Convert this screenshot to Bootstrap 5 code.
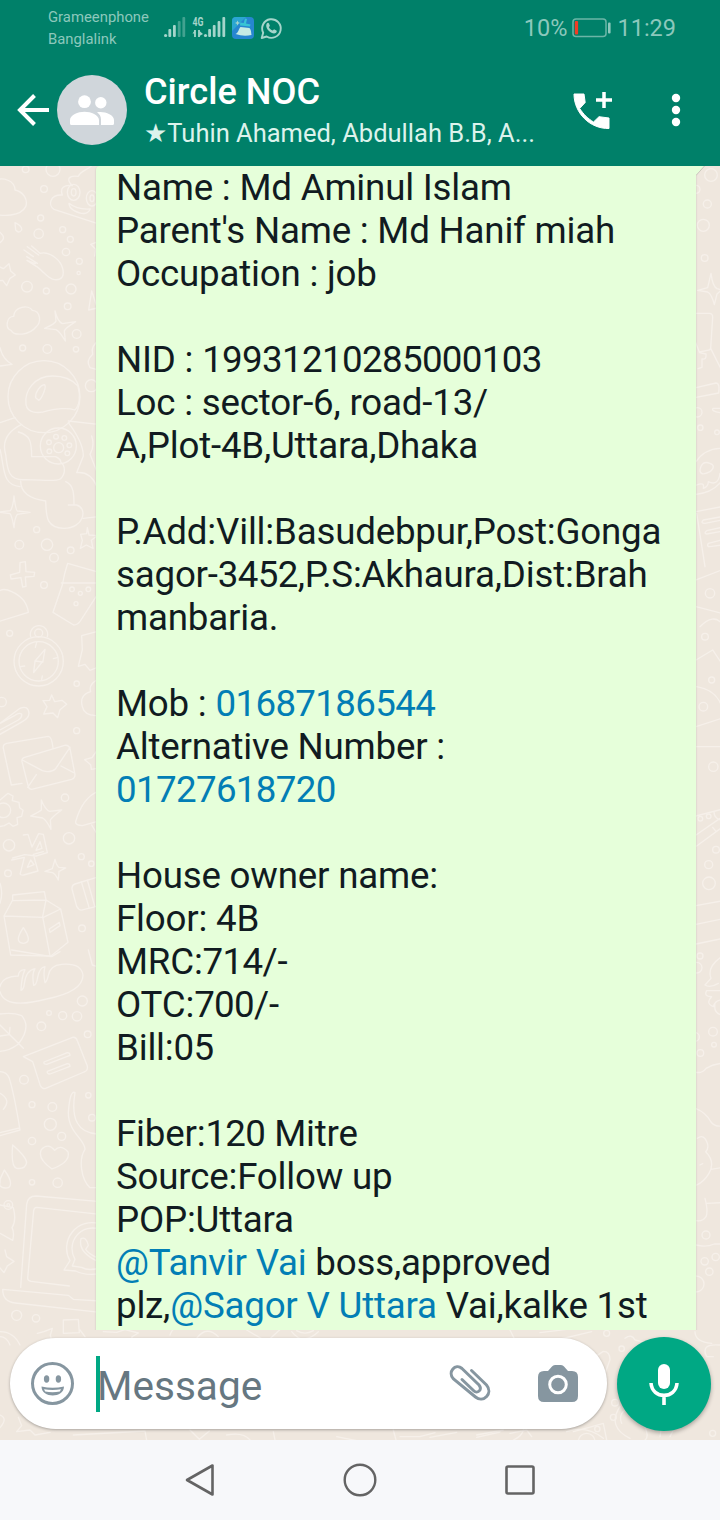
<!DOCTYPE html>
<html lang="en">
<head>
<meta charset="utf-8">
<meta name="viewport" content="width=device-width, initial-scale=1">
<title>Circle NOC</title>
<link href="https://cdn.jsdelivr.net/npm/bootstrap@5.3.0/dist/css/bootstrap.min.css" rel="stylesheet">
<style>
body{font-family:Roboto,"Liberation Sans",sans-serif;width:720px;height:1520px;overflow:hidden;background:#efe7de}
svg{display:block;flex:none}
.statusbar{height:55px;background:#008069;color:#8cc8bc;padding:0 44px 0 48px}
.carriers{font-size:14.85px;line-height:22px;width:116px;padding-top:1px}
.clock{font-size:23.5px;line-height:28px}
.clock svg{margin:0 6px 0 5px}
.appbar{height:111px;background:#008069;color:#fff;padding:0 0 2px 17px}
.avatar{width:70px;height:70px;background:#d0d6db;margin-left:8px}
.chat-head{width:428px;margin-left:17px}
.chat-title{font-size:36.2px;line-height:40px;font-weight:500;margin-bottom:6px}
.chat-sub{font-size:25.5px;line-height:30px;color:#dcf3ec}
.star{font-family:"DejaVu Sans",sans-serif;font-size:26px;line-height:20px}
.more{margin-left:59px}
.chat{height:1274px}
.wallpaper{top:0;left:0;z-index:0}
.thread{height:1164px;padding-left:96px;z-index:1;overflow:hidden}
.bubble{width:600px;height:1170px;background:#e6ffda;padding-left:20px;font-size:36.7px;line-height:43px;letter-spacing:-.2px;color:#111b21;box-shadow:0 1px 2px rgba(0,0,0,.2);border-top-left-radius:4px}
.bubble div{height:43px;white-space:nowrap}
.bubble a{color:#027eb5;text-decoration:none}
.bubble .num{letter-spacing:-.64px}
.tail{top:0;left:696px}
.composer{height:110px;padding:7px 9px 0 10px;z-index:2}
.field{width:597px;height:91px;margin-top:1px;border-radius:46px;background:#fff;box-shadow:0 1px 3px rgba(0,0,0,.3);padding-left:20px}
.caret{width:4px;height:56px;background:#00a884;margin-left:21px}
.hint{font-size:40.6px;line-height:48px;color:#667781;margin-left:-3px;padding-top:4px;width:351px}
.camera{margin-left:46px}
.mic{width:94px;height:94px;background:#00a884;box-shadow:0 2px 4px rgba(0,0,0,.3)}
.sysnav{height:80px;background:#f7f8fa;gap:124px}
</style>
</head>
<body class="d-flex flex-column">
<header>
  <div class="statusbar d-flex align-items-center">
    <div class="carriers"><div>Grameenphone</div><div>Banglalink</div></div>
    <svg width="120" height="28" viewBox="0 0 120 28" fill="#a5d5cb">
      <g><circle cx="1.6" cy="21.5" r="1.6"/><rect x="4.4" y="15" width="2.8" height="8" rx="1"/><rect x="9" y="11" width="2.8" height="12" rx="1"/><g opacity=".4"><rect x="13.8" y="7" width="2.8" height="16" rx="1"/><rect x="18.4" y="3" width="2.8" height="20" rx="1"/></g></g>
      <text x="28.5" y="12" font-size="12" font-weight="700" textLength="11" lengthAdjust="spacingAndGlyphs">4G</text>
      <path d="M31 16v7M35 16v7" stroke="#a5d5cb" stroke-width="1.8"/><path d="M28.5 19.5L31 16v3.5zM35.5 17l3.5 3-3.5 2z"/>
      <circle cx="41.5" cy="21.5" r="1.6"/><rect x="44.2" y="15" width="2.8" height="8" rx="1"/><rect x="48.8" y="11" width="2.8" height="12" rx="1"/><rect x="53.6" y="7" width="2.8" height="16" rx="1"/><rect x="58.4" y="3" width="2.8" height="20" rx="1"/>
      <rect x="68" y="3" width="22" height="22" rx="4" fill="#2786d0"/><path d="M68 17V7a4 4 0 0 1 4-4h10z" fill="#2ba6d2"/>
      <path d="M71.5 20c3-1 3-5 5-7l9 1c2 2 1.5 5 2 7q-8 2-16-1z" fill="#c5ebe4"/><path d="M76 11.500l10 1 .5-2-4.500-1 1-4.500-2-.5-1.300 4.500-3.500-.5z" fill="#38c4d4"/><path d="M73.500 6.500l.8 1.700 1.700.8-1.700.8-.8 1.700-.8-1.700-1.700-.8 1.700-.8z" fill="#a5d5cb"/>
      <path d="M97.700 24l1.500-5.200A9.300 9.300 0 1 1 102.700 22.500z" fill="none" stroke="#a5d5cb" stroke-width="1.900" stroke-linejoin="round"/><path d="M102.800 9.500c.8-1 1.800-.8 2.200 0l.8 2c.2.700-.7 1.200-.9 1.700 1 1.800 2 2.600 3.800 3.400.7-.4 1-1.400 1.700-1.200l2 1c.8.500.2 2-.7 2.600-2 1.200-4.700-.2-6.700-2s-3.700-5-2.200-7.500z"/>
    </svg>
    <div class="clock ms-auto d-flex align-items-center">
      <span>10%</span>
      <svg width="39" height="20" viewBox="0 0 39 20"><rect x="1" y="1" width="33" height="17.500" rx="3" fill="none" stroke="#6bb5a7" stroke-width="1.500"/><rect x="2.800" y="3" width="3.300" height="13.500" rx="1" fill="#f03d25"/><rect x="36" y="4.500" width="2.600" height="11" rx="1" fill="#8cc8bc"/></svg>
      <span>11:29</span>
    </div>
  </div>
  <div class="appbar d-flex align-items-center">
    <svg width="32" height="32" viewBox="0 0 32 32" fill="none" stroke="#fff" stroke-width="4"><path d="M32 16H3M17.500 1.500L3 16l14.500 14.500"/></svg>
    <div class="avatar rounded-circle d-flex align-items-center justify-content-center">
      <svg width="44" height="30" viewBox="0 0 44 30" fill="#fff"><circle cx="14.500" cy="6.700" r="6.400"/><circle cx="30.800" cy="7.800" r="5.700"/><path d="M0 28.500V25c0-5 8-8.300 14.500-8.300S29 20 29 25v5H1.500Q0 30 0 28.500zM31 30v-5.500c0-3-1.500-5.500-4-7.200C33 15.700 44 19 44 25v3.500q0 1.500-1.500 1.500z"/></svg>
    </div>
    <div class="chat-head">
      <div class="chat-title">Circle NOC</div>
      <div class="chat-sub text-nowrap"><span class="star">★</span>Tuhin Ahamed, Abdullah B.B, A...</div>
    </div>
    <svg width="40" height="40" viewBox="0 0 40 40" fill="#fff"><path d="M2 4h10l1.200 8.500-5.500 6C12 25 16 28.500 21.500 32l5.500-5.300 10 1.300v10.500C18 39 2 23 2 4z" stroke="#fff" stroke-width="1" stroke-linejoin="round"/><path d="M32 2v16M24 10h16" stroke="#fff" stroke-width="3.500"/></svg>
    <svg class="more" width="10" height="34" viewBox="0 0 10 34" fill="#fff"><circle cx="5" cy="5" r="4.200"/><circle cx="5" cy="17" r="4.200"/><circle cx="5" cy="29" r="4.200"/></svg>
  </div>
</header>

<main class="chat position-relative">
  <svg class="wallpaper position-absolute" width="720" height="1274" viewBox="0 0 720 1274" fill="none" stroke="#f6f0ea" stroke-width="4" stroke-linejoin="round" stroke-linecap="round">
    <!-- left strip: clouds, glove, astronaut -->
    <g transform="scale(.33333)">
      <circle cx="77" cy="10" r="10"/><circle cx="159" cy="10" r="21"/><circle cx="132" cy="69" r="10"/><circle cx="122" cy="156" r="9"/><circle cx="116" cy="203" r="14"/><circle cx="188" cy="191" r="9"/><circle cx="211" cy="220" r="9"/><circle cx="198" cy="258" r="11"/><circle cx="238" cy="286" r="9"/><circle cx="236" cy="321" r="5"/><circle cx="81" cy="362" r="16"/><circle cx="139" cy="375" r="9"/><circle cx="213" cy="369" r="15"/><circle cx="203" cy="421" r="10"/><circle cx="230" cy="504" r="13"/><circle cx="228" cy="550" r="8"/><circle cx="142" cy="549" r="13"/><circle cx="68" cy="546" r="9"/><circle cx="274" cy="659" r="18"/>
      <path d="M-20 45C10 30 45 45 45 72c25 5 40 30 32 50-15 30-70 30-100 20"/>
      <path d="M300 175L162 130c-18-12-14-45 25-43-8-20 5-32 30-28-20-20-10-32 18-28 10-22 40-20 50-45"/><ellipse cx="221" cy="79" rx="19" ry="24"/><ellipse cx="221" cy="79" rx="7" ry="11"/><ellipse cx="276" cy="97" rx="17" ry="23"/><ellipse cx="276" cy="97" rx="6" ry="10"/><path d="M207 112q25 20 64 17-12 25-50 4-14-8-14-21z"/>
      <path d="M45 170q22 10 20 22-8 12-18 0zM-5 195q20 15 14 25t-14 12M-5 300l15 8 17-15 5 22 14 12-16 10-10 22-12-16-15 2"/>
      <path d="M72 252l28 20M82 242l34 25M95 240l25 22c28-8 62 20 68 45 6 25-4 36-24 34-20-2-38-30-55-40l-28-18 25 10M80 272l32 20"/>
      <path d="M33 493c-20-8-12-42 8-42 2-30 45-36 56-18 25 2 28 35 11 50-20 25-65 28-75 10z"/>
      <path d="M165 435q8 32 22 38l40-6q-32 20-34 28l3 30q-18-30-28-34l-34-4q32-14 34-22zM275 375l-9 57 26-6zM300 225l-28 10 15 15-3 20M0 545q8 35 36 50L0 600"/>
      <circle cx="132" cy="692" r="108"/><path d="M78 715c-5-40 25-85 80-85 35 0 60 12 76 30 8 30 5 60-10 72-20-8-60-3-80 2-30 10-62 8-66-19zM107 695c-2-18 15-38 26-39 8 5-6 40-17 47z"/>
      <path d="M65 775c-40 20-60 50-48 90 5 50 10 80 60 76 50 0 90 8 105-3 15-15 15-38 0-50 0 0 2-8-15-16h-72c0-45-5-65-40-74"/><path d="M45 755L0 770M0 850c15 60 5 105 60 112M62 945q0 50 75 60c2 45 0 80 55 82 60 0 72-60 38-70h-25M222 1017c0-30 0-60-25-70M250 1057l45-5M205 765l90 10M205 770q45 60 45 100l-20 50q40-5 60 40M275 810q10 30-5 55l20 50"/>
      <circle cx="175" cy="840" r="54"/><circle cx="176" cy="845" r="15"/><circle cx="147" cy="829" r="7"/><circle cx="168" cy="812" r="7"/><circle cx="193" cy="816" r="7"/><circle cx="208" cy="838" r="7"/><circle cx="202" cy="862" r="7"/><circle cx="148" cy="856" r="7"/>
      <path d="M300 520q-30 20-22 45-22 20-8 40l30 8"/>
      <path d="M42 990q5 42 10 45l38 4-38 6q-8 10-10 40-6-35-12-42l-35-5 36-4q8-10 11-44zM262 1085l5 22 25 2-18 14 5 24-20-10-18 10 6-24-5-18 18-2z"/>
      <circle cx="110" cy="1091" r="9"/><circle cx="141" cy="1136" r="17"/><circle cx="58" cy="1136" r="13"/><circle cx="162" cy="1175" r="13"/><circle cx="212" cy="1153" r="10"/>
    </g>
    <!-- left strip: compass, envelopes, carton -->
    <g transform="translate(0 394) scale(.33333)">
      <path d="M60 8l16-3 2 30 26 2-2 12-26 2 2 28-10 2-5-28-30 4-2-12 28-8zM203 10l97 28M184 69h110M203 10q-10 30-16 65l-28 82 62 38q12 0 20-12l55-85"/><path d="M-10 100q15-20 45-5 45 20 50 62L-5 185"/>
      <circle cx="132" cy="75" r="10"/><circle cx="216" cy="88" r="7"/><circle cx="241" cy="100" r="6"/><circle cx="265" cy="88" r="7"/><circle cx="228" cy="131" r="6"/><circle cx="29" cy="220" r="9"/><circle cx="230" cy="371" r="8"/><circle cx="230" cy="512" r="9"/><circle cx="5" cy="426" r="14"/><circle cx="195" cy="713" r="11"/><circle cx="207" cy="835" r="17"/><circle cx="27" cy="856" r="17"/><circle cx="244" cy="890" r="9"/><circle cx="274" cy="911" r="8"/><circle cx="24" cy="940" r="10"/><circle cx="246" cy="1105" r="10"/>
      <circle cx="116" cy="304" r="74"/><circle cx="116" cy="304" r="59"/><path d="M92 230a26 26 0 1 1 50 0M106 262l4-15M125 358l2-10M62 320l12-2M160 296l12-3M135 268l-30 35-4 35 28-35zM105 303l24 3"/><circle cx="116" cy="219" r="12"/>
      <path d="M290 215l-45 12 2 42-12 50 20-6 15 18 25-10M290 360q-25 15-18 35-35 10-25 45 5 25 40 27M0 490l60-45q25-10 27 15 0 15-20 25L0 523M0 510l55-30q12-8 10-18-8-5-20 4L0 490"/>
      <path d="M155 405l9 20 22-4 14 12-20 16-7 24-14-14-28 3 10-22-12-18 20-1zM66 670l-32 5L10 565q-2-12 10-15l125-21q10 0 14 34M66 605q-2-10 8-13l120-36q12-2 16 10l15 78q0 10-10 14L95 688q-8 0-10-8zM67 600l60 32q25 8 40-6l43-64M83 682l26-38M183 618l38 20"/>
      <path d="M0 720l10-8 14-12 15 8-2 14 20 5 2 16 10 8-4 18-14 4 2 20-14 6-12-10-14 8-20 4"/><circle cx="10" cy="751" r="22"/>
      <path d="M124 720q12 30 25 34l36-4q-28 20-34 30l2 28q-14-28-25-34l-36-6q25-12 32-18zM70 825l14-2 12 38 20-40 14 2 12 55-34 10-34-4-36 10M35 900l38-8-12 48q-2 6 10 5l43-12-14-50 30-8M92 900l10 14-20 8zM120 845l6 20-18 6zM165 898q5 20 12 24l20 2-20 10-2 26q-10-20-18-22l-22-4 22-8zM292 695q-45 20-65 90-2 10 20 12l43-12M275 795l15 25M290 573l-14 20-22 6 18 15 2 14 14-2"/>
      <path d="M38 1005l95-10 5 25-100 2zM38 1020l-26 48 118 4 52-25-44-27-10 50 22 118L32 1185l-20-117M182 1047l22 100-54 43M70 1103q-30 45 0 47 30-2 0-47zM148 1107l30-20 2 10-30 20z"/>
      <path d="M290 952l-65 20q-10 3-9 15l14 52q8 15 20 10l40-10M244 965l24 80M262 960l22 78M0 970q10 30 0 60"/>
    </g>
    <!-- left strip: bread, speech note, laptop -->
    <g transform="translate(0 784) scale(.33333)">
      <path d="M0 110q5-30 55-32 0-18 20-19-10 20-12 62 8-2 10-20 5-40 32-45-10 15-4 50 8 0 12-24 6-30 22-32-6 20 0 48 6-4 10-22 5-30 40-33 58-5 64 32 0 50-109 72Q15 180 0 125M35 0l120 20 25-15M0 192q40-5 65 5 30 35-10 85-25 20-55 22M0 225l70 70M30 232l-2 22-28 4M265 0l12 45 15 5"/>
      <path d="M70 320l148-58q10-2 14 10l30 76q3 14-10 18L135 416q-10 0-15-12L98 335zM132 336l70-28q8 0 8 8l-70 27q-10 0-8-7zM142 364l60-23q8 0 8 8l-60 23q-10 0-8-8z"/>
      <circle cx="247" cy="153" r="15"/><circle cx="147" cy="189" r="7"/><circle cx="188" cy="197" r="12"/><circle cx="231" cy="199" r="14"/><circle cx="124" cy="229" r="13"/><circle cx="263" cy="253" r="10"/><circle cx="72" cy="389" r="13"/><circle cx="96" cy="464" r="9"/><circle cx="157" cy="471" r="13"/><circle cx="151" cy="523" r="18"/><circle cx="185" cy="559" r="12"/><circle cx="96" cy="573" r="11"/><circle cx="265" cy="436" r="8"/><circle cx="276" cy="503" r="10"/><circle cx="96" cy="697" r="8"/><circle cx="173" cy="698" r="14"/><circle cx="25" cy="765" r="13"/><circle cx="25" cy="765" r="4"/><circle cx="50" cy="1096" r="15"/><circle cx="108" cy="1105" r="11"/>
      <path d="M0 365q20 0 28 20 15 50 32 155L0 557M0 430q35 20 10 48M0 548l58-14M38 585q40 35 42 52-4 22-30 18-18-5-12-70zM13 660q28 38 14 52-18 6-28-6l2-20zM156 657q-45-32-32-58 20-22 40 2 18-20 40 5 8 30-48 51z"/>
      <path d="M225 428q-15-10-20 60c0 60 50 80 50 110-20 30-12 90 15 115h25M225 428q-20 120 68 124M0 765l40 8q10 40-4 60 8 15 2 38L0 850M15 900l5 20 22 14-20 14-10 20-12-14"/>
      <path d="M300 755L108 738q-25 0-28 25L62 1012M300 793L110 772q-8 0-9 10L83 985q0 8 10 9l115 14M8 1018l197 18 15 12 80 5M8 1018q0 38 38 41l254 28M300 822a76 76 0 0 0-90 110l-18 28 35 3q30 15 73 8M300 838a62 62 0 0 0-75 90l-8 20 28 4q20 12 55 2M243 866q15-8 22 20l-8 12q10 15 35 25M243 866q-10 40 50 68M190 1110l45-2 3 40-48 2zM112 1150l20-5 25-10-6 20 5 20M0 1145q40 0 60 40M0 1160q20 0 30 25"/>
    </g>
    <!-- right strip -->
    <g transform="translate(660 -6) scale(.33333)">
      <circle cx="153" cy="45" r="19"/><circle cx="142" cy="132" r="12"/><circle cx="130" cy="196" r="18"/><circle cx="134" cy="294" r="10"/><circle cx="108" cy="88" r="12"/><circle cx="112" cy="757" r="14"/><circle cx="121" cy="803" r="8"/><circle cx="171" cy="817" r="7"/>
      <path d="M153 340q5 40 18 46l14 4-14 12-8 32q-8-32-20-38l-30-5 30-8zM100 460h48q10 0 10 12l-6 92q0 7-10 7l-24 5-20-50M152 565l35 70M118 578l20 4q2 18-12 15v25l-12 4M108 683l60-14q12 0 8 30L108 712M185 745h-25q-10 8 25 14M185 865q-50 0-77 40M108 1003q50-5 77-40M185 1040l-77 15M120 930q5-30 30-20 20 8 0 25-30 15-30-5zM110 975q25-10 20 10 15-5 15-20 30 15 35-25M185 1070l-55 10q-10 10 5 10l50-10M185 1102l-45 10q-10 8 0 10l45-8M185 1140l-40 10q-6 10 5 10l35-5M110 1060l25 160"/>
      <path d="M108 1260l77-30M108 1340l77 20M120 1400q40-40 65-10M108 1500l50-30 27 40M110 1580q60 10 75 60M108 1700l77-25M108 1760h77"/><circle cx="150" cy="1300" r="14"/><circle cx="135" cy="1430" r="10"/><circle cx="155" cy="1560" r="9"/><circle cx="130" cy="1640" r="13"/><circle cx="160" cy="1820" r="14"/>
    </g>
    <g transform="translate(660 634) scale(.33333)">
      <circle cx="121" cy="56" r="7"/><circle cx="146" cy="49" r="7"/><circle cx="168" cy="149" r="10"/><circle cx="146" cy="194" r="12"/><circle cx="147" cy="250" r="19"/><circle cx="120" cy="468" r="9"/><circle cx="110" cy="503" r="16"/><circle cx="159" cy="695" r="13"/><circle cx="162" cy="734" r="7"/><circle cx="121" cy="759" r="10"/><circle cx="105" cy="711" r="13"/><circle cx="138" cy="1305" r="12"/><circle cx="134" cy="1384" r="11"/><circle cx="167" cy="1371" r="11"/><circle cx="148" cy="1415" r="11"/><circle cx="108" cy="1452" r="24"/>
      <path d="M108 48l77-20M108 105l72-50M110 138l75-55M158 82l10 12M162 35q0 20 20 25M108 317l77-14M108 373l77-16M108 432l77-16M185 470q-45 30-32 65l-18 20q15 10 40-5M185 572h-45q-10 18 15 18-20 20 5 30 5-20 25-20M165 610q-5 30 20 35M108 817q20 3 30-12 20-12 47-15M108 926q30 12 45 40 12 15 32 12M112 1015q20-15 30 15 5 15-5 25 30 30 10 65-15 25-37 35M153 1108l32-5M120 1095l8-4M135 1195q10 40 3 55-10 15-28 12M140 1210l45-2M108 1335q30 8 55-3h22"/>
    </g>
    <!-- strip around the composer -->
    <g transform="translate(0 1154) scale(.33333)">
      <path d="M240 30l15 20M310 35l40 2 25-8 40 10-20 12 8 18M510 45q10-30 35-20M590 55q30-40 65-5M740 30l60 35 42-38M875 35q20 25 40 22t40-22M890 32q25 15 50 0M0 285q25 10 0 38M55 292l10 25-15 18 40-5 15 15 45-8M220 345l215-12 5 28M570 330l28 28 30-25M680 345q50-10 70 15M820 335l5 25M1010 350l60 12M1180 330l8 30M1200 350h60l45-12M1290 352l80-15M1430 345l80-15M1570 330q-5 20-30 30M1700 335q60-20 110 20M1860 260q-40 60 30 95M1960 250q30 60 20 100"/>
    </g>
    <g transform="translate(360 1154) scale(.33333)">
      <path d="M450 30l15 30M540 38l80-10M590 60l105-25M690 120l40-26q20 0 20 25l-20 55M795 55q20-15 30 5l20 5M1060 110h-20q-20-40 40-35M1005 35q0 30 50 35M785 310q-10-25 10-40M850 310q20 40 5 50M950 310l-20 40M640 335q55-15 90-25l10 50M450 340l50-10 15 20M350 352l70-16"/><circle cx="785" cy="86" r="8"/><circle cx="740" cy="40" r="9"/><circle cx="765" cy="248" r="10"/><circle cx="760" cy="292" r="9"/><circle cx="712" cy="327" r="8"/><circle cx="680" cy="365" r="25"/><circle cx="1058" cy="340" r="9"/>
    </g>
  </svg>
  <section class="thread position-relative">
    <div class="bubble">
      <div>Name : Md Aminul Islam</div>
      <div>Parent's Name : Md Hanif miah</div>
      <div>Occupation : job</div>
      <div></div>
      <div>NID : <span class="num">19931210285000103</span></div>
      <div>Loc : sector-6, road-13/</div>
      <div>A,Plot-4B,Uttara,Dhaka</div>
      <div></div>
      <div>P.Add:Vill:Basudebpur,Post:Gonga</div>
      <div>sagor-<span class="num">3452</span>,P.S:Akhaura,Dist:Brah</div>
      <div>manbaria.</div>
      <div></div>
      <div>Mob : <a href="#" class="num">01687186544</a></div>
      <div>Alternative Number :</div>
      <div><a href="#" class="num">01727618720</a></div>
      <div></div>
      <div>House owner name:</div>
      <div>Floor: 4B</div>
      <div>MRC:<span class="num">714</span>/-</div>
      <div>OTC:<span class="num">700</span>/-</div>
      <div>Bill:<span class="num">05</span></div>
      <div></div>
      <div>Fiber:<span class="num">120</span> Mitre</div>
      <div>Source:Follow up</div>
      <div>POP:Uttara</div>
      <div><a href="#">@Tanvir Vai</a> boss,approved</div>
      <div>plz,<a href="#">@Sagor V Uttara</a> Vai,kalke 1st</div>
    </div>
    <svg class="tail position-absolute" width="10" height="11"><path d="M0 0h8L0 9z" fill="#e6ffda"/><path d="M8.500 0L0 9.500" stroke="#c9c9bc"/></svg>
  </section>
  <footer class="composer position-relative d-flex justify-content-between">
    <div class="field d-flex align-items-center">
      <svg width="45" height="45" viewBox="0 0 45 45"><circle cx="22.500" cy="22.500" r="20" fill="none" stroke="#8696a0" stroke-width="3"/><ellipse cx="16.600" cy="18" rx="2.700" ry="3.700" fill="#8696a0"/><ellipse cx="28.400" cy="18" rx="2.700" ry="3.700" fill="#8696a0"/><path d="M11.500 25.500q11 2.500 22.500 0c0 12-22.500 12-22.500 0z" fill="#8696a0"/><path d="M14 28.200q8.500 1.500 17 0l-1.200 2.300q-7.300 1.500-14.600 0z" fill="#fff"/></svg>
      <div class="caret"></div>
      <div class="hint">Message</div>
      <svg width="44" height="40" viewBox="0 0 44 40" fill="none" stroke="#8696a0" stroke-width="3" stroke-linecap="round"><path d="M23.500 6.500l15 14.500c7 8-3 18.500-11 12L5.500 15C-1 8 7.500-1 14 4.500L31 21c4 5-2 9-5 6L14 15.500"/></svg>
      <svg class="camera" width="40" height="40" viewBox="0 0 40 40"><path d="M6 7h4l4-4.500Q15 1 17 1h6q2 0 3 1.500L30 7h4q6 0 6 6v19q0 6-6 6H6q-6 0-6-6V13q0-6 6-6z" fill="#8696a0"/><circle cx="20" cy="20.500" r="8.300" fill="none" stroke="#fff" stroke-width="3"/></svg>
    </div>
    <div class="mic rounded-circle d-flex align-items-center justify-content-center">
      <svg width="30" height="41" viewBox="0 0 30 41"><rect x="9" y="0" width="12" height="25" rx="6" fill="#fff"/><path d="M2 19c1 16.500 25 16.500 26 0M15 31v10" fill="none" stroke="#fff" stroke-width="3.600"/></svg>
    </div>
  </footer>
</main>

<nav class="sysnav d-flex justify-content-center align-items-center">
  <svg width="36" height="36" viewBox="0 0 36 36" fill="none" stroke="#646464" stroke-width="2.600" stroke-linejoin="round"><path d="M30.500 3.500v29L5 18z"/></svg>
  <svg width="36" height="36" viewBox="0 0 36 36" fill="none" stroke="#646464" stroke-width="2.400"><circle cx="18" cy="18" r="15.300"/></svg>
  <svg width="36" height="36" viewBox="0 0 36 36" fill="none" stroke="#646464" stroke-width="2.600"><rect x="4.500" y="4.500" width="27" height="27" rx="1.500"/></svg>
</nav>
<script src="https://cdn.jsdelivr.net/npm/bootstrap@5.3.0/dist/js/bootstrap.bundle.min.js"></script>
</body>
</html>
